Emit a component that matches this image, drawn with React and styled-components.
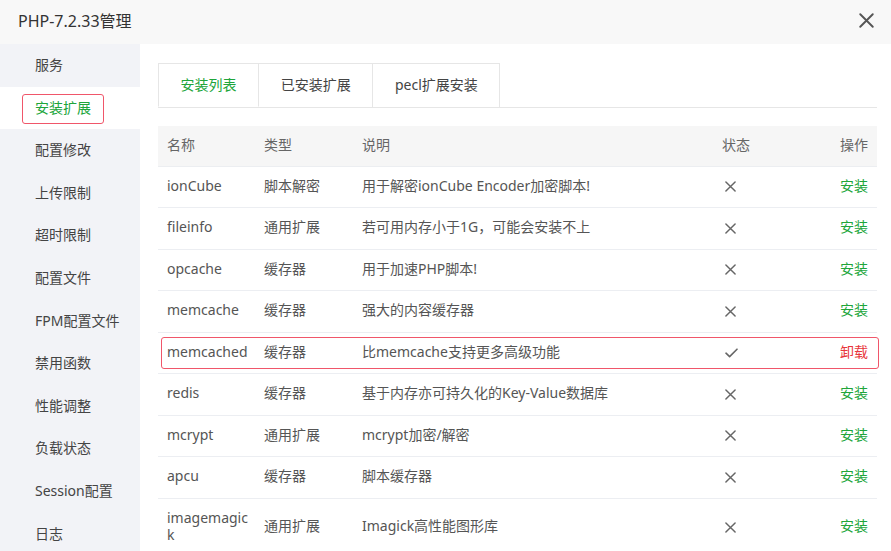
import React, { useState } from "react";
import styled, { createGlobalStyle } from "styled-components";

const GlobalStyle = createGlobalStyle`
  html, body {
    margin: 0;
    padding: 0;
    background: #fff;
  }
  body {
    font-family: "Noto Sans", "Noto Sans CJK SC", sans-serif;
    font-size: 14px;
    color: #333;
  }
`;

const menu = [
  "服务",
  "安装扩展",
  "配置修改",
  "上传限制",
  "超时限制",
  "配置文件",
  "FPM配置文件",
  "禁用函数",
  "性能调整",
  "负载状态",
  "Session配置",
  "日志",
];

const tabs = ["安装列表", "已安装扩展", "pecl扩展安装"];

const extensions = [
  { name: "ionCube", type: "脚本解密", desc: "用于解密ionCube Encoder加密脚本!", installed: false },
  { name: "fileinfo", type: "通用扩展", desc: "若可用内存小于1G，可能会安装不上", installed: false },
  { name: "opcache", type: "缓存器", desc: "用于加速PHP脚本!", installed: false },
  { name: "memcache", type: "缓存器", desc: "强大的内容缓存器", installed: false },
  { name: "memcached", type: "缓存器", desc: "比memcache支持更多高级功能", installed: true, marked: true },
  { name: "redis", type: "缓存器", desc: "基于内存亦可持久化的Key-Value数据库", installed: false },
  { name: "mcrypt", type: "通用扩展", desc: "mcrypt加密/解密", installed: false },
  { name: "apcu", type: "缓存器", desc: "脚本缓存器", installed: false },
  { name: "imagemagick", type: "通用扩展", desc: "Imagick高性能图形库", installed: false },
];

const CrossIcon = ({ size = 11, stroke = 1.6 }) => (
  <svg width={size} height={size} viewBox="0 0 12 12" fill="none">
    <path d="M1 1L11 11M11 1L1 11" stroke="currentColor" strokeWidth={stroke} strokeLinecap="round" />
  </svg>
);

const CheckIcon = () => (
  <svg width="13" height="10" viewBox="0 0 13 10" fill="none">
    <path d="M1 5.2L4.6 8.6L12 1.2" stroke="currentColor" strokeWidth="1.6" strokeLinecap="round" strokeLinejoin="round" />
  </svg>
);

const App = () => {
  const [active, setActive] = useState(1);
  const [tab, setTab] = useState(0);
  return (
    <Page>
      <GlobalStyle />
      <Header>
        <Title>PHP-7.2.33管理</Title>
        <CloseBtn>
          <CrossIcon size={15} stroke={1.5} />
        </CloseBtn>
      </Header>
      <Body>
        <Sidebar>
          {menu.map((m, i) => (
            <MenuItem key={m} $active={i === active} onClick={() => setActive(i)}>
              <MenuLabel $active={i === active}>{m}</MenuLabel>
            </MenuItem>
          ))}
        </Sidebar>
        <Content>
          <TabBar>
            {tabs.map((t, i) => (
              <Tab key={t} $active={i === tab} onClick={() => setTab(i)}>
                {t}
              </Tab>
            ))}
          </TabBar>
          <Table>
            <HeadRow>
              <Cell>名称</Cell>
              <Cell>类型</Cell>
              <Cell>说明</Cell>
              <Cell>状态</Cell>
              <Cell $right>操作</Cell>
            </HeadRow>
            {extensions.map((e) => (
              <Row key={e.name} $marked={e.marked}>
                <NameCell>{e.name}</NameCell>
                <Cell>{e.type}</Cell>
                <Cell>{e.desc}</Cell>
                <StatusCell>{e.installed ? <CheckIcon /> : <CrossIcon />}</StatusCell>
                <Cell $right>
                  <Action $danger={e.installed}>{e.installed ? "卸载" : "安装"}</Action>
                </Cell>
              </Row>
            ))}
          </Table>
        </Content>
      </Body>
    </Page>
  );
};

const Page = styled.div`
  width: 891px;
  height: 551px;
  overflow: hidden;
  display: flex;
  flex-direction: column;
  background: #fff;
`;

const Header = styled.div`
  height: 44px;
  flex-shrink: 0;
  display: flex;
  align-items: center;
  justify-content: space-between;
  padding: 0 17px 4px 18px;
  box-sizing: border-box;
  background: #f8f8f8;
`;

const Title = styled.div`
  font-size: 16px;
  color: #333;
`;

const CloseBtn = styled.div`
  display: flex;
  color: #555;
  cursor: pointer;
`;

const Body = styled.div`
  flex: 1;
  display: flex;
  min-height: 0;
`;

const Sidebar = styled.div`
  width: 140px;
  flex-shrink: 0;
  background: #f2f3f7;
`;

const MenuItem = styled.div`
  position: relative;
  height: 42.6px;
  line-height: 42.6px;
  padding-left: 35px;
  font-size: 14px;
  color: ${(p) => (p.$active ? "#20a53a" : "#444")};
  background: ${(p) => (p.$active ? "#fff" : "transparent")};
  cursor: pointer;
`;

const MenuLabel = styled.span`
  &::after {
    content: "";
    display: ${(p) => (p.$active ? "block" : "none")};
    position: absolute;
    left: 22px;
    top: 7px;
    width: 82px;
    height: 30px;
    box-sizing: border-box;
    border: 1.5px solid #f0566a;
    border-radius: 3px;
  }
`;

const Content = styled.div`
  flex: 1;
  padding: 19px 14px 0 18px;
  min-width: 0;
`;

const TabBar = styled.div`
  display: flex;
  height: 44px;
  border-bottom: 1px solid #e6e6e6;
  margin-bottom: 18px;
`;

const Tab = styled.div`
  height: 44px;
  box-sizing: border-box;
  padding: 0 21.6px;
  line-height: 42px;
  font-size: 14px;
  color: ${(p) => (p.$active ? "#20a53a" : "#444")};
  background: #fff;
  border: 1px solid #e6e6e6;
  border-left: none;
  border-bottom: ${(p) => (p.$active ? "1px solid #fff" : "none")};
  cursor: pointer;
  &:first-child {
    border-left: 1px solid #e6e6e6;
  }
`;

const Table = styled.div`
  width: 719px;
`;

const columns = "97px 98px 360px 110px 54px";

const HeadRow = styled.div`
  display: grid;
  grid-template-columns: ${columns};
  align-items: center;
  height: 40.5px;
  background: #f6f6f6;
  color: #666;
  border-bottom: 1px solid #eceef1;
  box-sizing: border-box;
  & > div {
    padding-top: 9px;
    padding-bottom: 12px;
  }
`;

const Row = styled.div`
  position: relative;
  display: grid;
  grid-template-columns: ${columns};
  align-items: center;
  min-height: 41.5px;
  box-sizing: border-box;
  color: #555;
  border-bottom: 1px solid #eceef2;
  &::after {
    content: "";
    display: ${(p) => (p.$marked ? "block" : "none")};
    position: absolute;
    left: 3px;
    right: -2px;
    top: 4.5px;
    height: 32px;
    box-sizing: border-box;
    border: 1.5px solid #f0566a;
    border-radius: 3px;
  }
`;

const Cell = styled.div`
  padding: 10px 9px 13px;
  line-height: 17px;
  font-size: 14px;
  white-space: nowrap;
  text-align: ${(p) => (p.$right ? "right" : "left")};
`;

const NameCell = styled(Cell)`
  padding-right: 4px;
  white-space: normal;
  word-break: break-all;
`;

const StatusCell = styled(Cell)`
  display: flex;
  align-items: center;
  padding: 12px 9px 12px 12px;
  color: #666;
`;

const Action = styled.span`
  color: ${(p) => (p.$danger ? "#e8363c" : "#20a53a")};
  cursor: pointer;
`;

export default App;
